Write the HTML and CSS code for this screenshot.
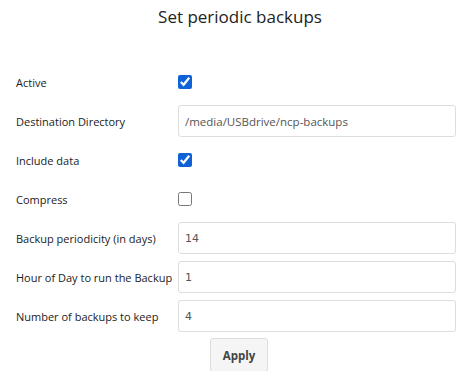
FILE: index.html
```html
<!DOCTYPE html>
<html lang="en">
<head>
  <meta charset="UTF-8" />
  <title>Set periodic backups</title>
  <link rel="stylesheet" href="styles.css">
</head>
<body>
  <!-- Page title -->
  <h1 class="title">Set periodic backups</h1>

  <!-- Backup settings form -->
  <form class="settings">
    <label class="label" for="active">Active</label>
    <div class="field"><input class="check" type="checkbox" id="active" checked></div>

    <label class="label" for="destdir">Destination Directory</label>
    <div class="field"><input class="text" type="text" id="destdir" value="/media/USBdrive/ncp-backups"></div>

    <label class="label" for="includedata">Include data</label>
    <div class="field"><input class="check" type="checkbox" id="includedata" checked></div>

    <label class="label" for="compress">Compress</label>
    <div class="field"><input class="check" type="checkbox" id="compress"></div>

    <label class="label" for="backupdays">Backup periodicity (in days)</label>
    <div class="field"><input class="text num" type="text" id="backupdays" value="14"></div>

    <label class="label" for="backuphour">Hour of Day to run the Backup</label>
    <div class="field"><input class="text num" type="text" id="backuphour" value="1"></div>

    <label class="label" for="backuplimit">Number of backups to keep</label>
    <div class="field"><input class="text num" type="text" id="backuplimit" value="4"></div>

    <div class="field apply-row"><button class="apply" type="button">Apply</button></div>
  </form>
</body>
</html>
```

FILE: styles.css
```css
/* Reset and base font */
html, body {
  margin: 0;
  padding: 0;
}

body {
  font-family: 'Open Sans', 'Noto Sans', sans-serif;
  color: #222;
  background: #fff;
}

/* Title */
.title {
  margin: 0;
  padding: 5px 0 0 22px;
  height: 66px;
  box-sizing: border-box;
  font-size: 17px;
  line-height: 24px;
  font-weight: 400;
  text-align: center;
  color: #222;
}

/* Two-column form grid */
.settings {
  display: grid;
  grid-template-columns: 162px 278px;
  grid-auto-rows: 32px;
  row-gap: 7px;
  margin: 0 0 0 16px;
}

.label {
  display: flex;
  align-items: center;
  font-size: 11px;
  color: #222;
  white-space: nowrap;
}

.field {
  display: flex;
  align-items: center;
}

/* Checkboxes */
.check {
  margin: 0;
  width: 14px;
  height: 14px;
  accent-color: #0f62d6;
}

/* Text inputs */
.text {
  box-sizing: border-box;
  width: 100%;
  height: 32px;
  margin: 0;
  padding: 0 6px;
  border: 1px solid #ddd;
  border-radius: 3px;
  font-family: 'Open Sans', 'Noto Sans', sans-serif;
  font-size: 11.5px;
  color: #555;
}

.num {
  font-family: 'DejaVu Sans', sans-serif;
  font-size: 11px;
  color: #555;
}

/* Apply button */
.apply-row {
  grid-column: 2;
  align-items: flex-start;
}

.apply {
  margin: -1px 0 0 32px;
  width: 58px;
  height: 34px;
  background: #f5f5f5;
  border: 1px solid #ddd;
  border-radius: 3px;
  font-family: 'Open Sans', 'Noto Sans', sans-serif;
  font-size: 11.5px;
  font-weight: 700;
  color: #444;
}
```
